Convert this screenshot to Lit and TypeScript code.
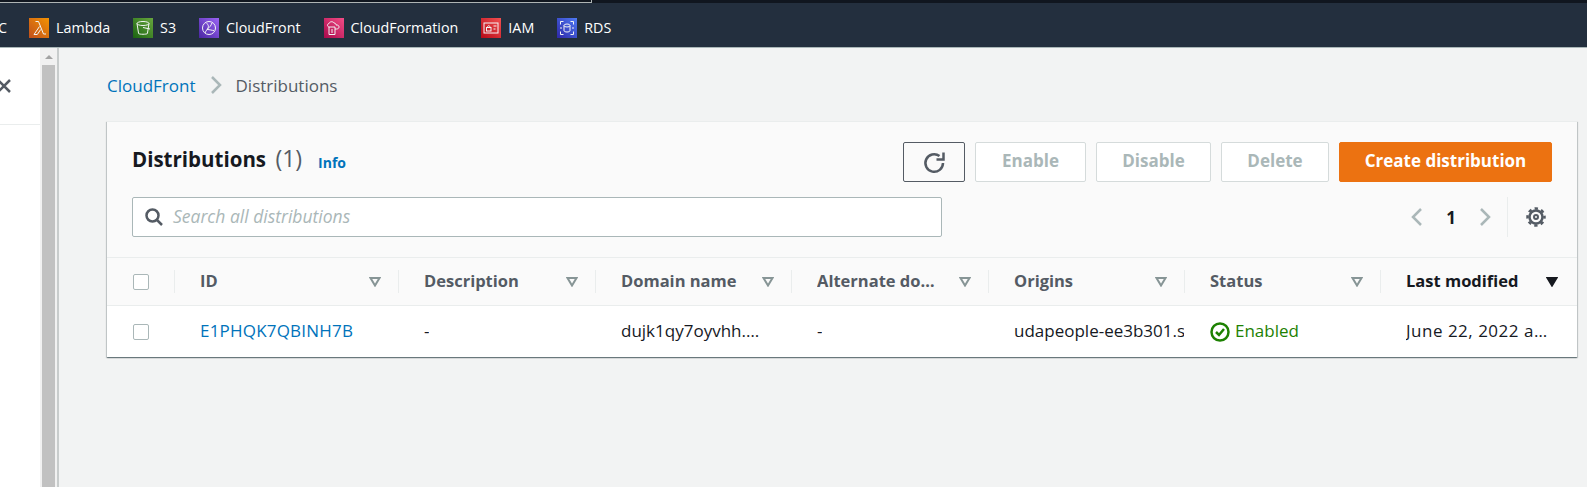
import { LitElement, html, css, svg } from 'lit'
import { customElement } from 'lit/decorators.js'

const services = [
    {
        name: 'Lambda',
        cls: 'lambda',
        glyph: svg`<path d="M6.500 3.500h3l5 12.500h2.500M10.500 8.500L5 16.500h3.300l3.400-5" />`
    },
    {
        name: 'S3',
        cls: 's3',
        glyph: svg`<ellipse cx="10" cy="5.500" rx="6" ry="2" /><path d="M4 5.500l1.600 10c.6 1 8.200 1 8.800 0l1.600-10M10 9.500l7 1.500" />`
    },
    {
        name: 'CloudFront',
        cls: 'cloudfront',
        glyph: svg`<circle cx="10" cy="10" r="6.500" /><path d="M7 4.500c3 3 3 4 1 7s-2 3.500-1 3.500M8 11.500c3 0 5 1 7 1M13 4.800c-1 3-2 4-5 6.700" />`
    },
    {
        name: 'CloudFormation',
        cls: 'cloudformation',
        glyph: svg`<path d="M5 9h6v7.500H5zM7 12h2M7 14h2M5 9c-2-.5-2-3 0-3.500C5.500 3.500 9 3 10 5c2 0 2 1.500 2 2h1c2.500 0 3 4-.5 4H11" />`
    },
    {
        name: 'IAM',
        cls: 'iam',
        glyph: svg`<rect x="3" y="5" width="14" height="10" /><rect x="5.500" y="9.500" width="4.500" height="3.500" /><path d="M6.500 9.500c0-2.500 2.500-2.500 2.500 0M12.500 8h3M12.500 11h2" />`
    },
    {
        name: 'RDS',
        cls: 'rds',
        glyph: svg`<ellipse cx="10" cy="7.500" rx="3" ry="1.500" /><path d="M7 7.500v5c0 2 6 2 6 0v-5M3.500 6.500V3.500h3M16.500 6.500V3.500h-3M3.500 13.500v3h3M16.500 13.500v3h-3M3 10h2M15 10h2" />`
    }
]

const columns = [
    { name: 'ID', cell: 'E1PHQK7QBINH7B', kind: 'link' },
    { name: 'Description', cell: '-' },
    { name: 'Domain name', cell: 'dujk1qy7oyvhh.cloudfront.net' },
    { name: 'Alternate domain names', cell: '-' },
    { name: 'Origins', cell: 'udapeople-ee3b301.s3.amazonaws.com', kind: 'clip' },
    { name: 'Status', cell: 'Enabled', kind: 'status' },
    { name: 'Last modified', cell: 'June 22, 2022 at 4:12:09 PM UTC', kind: 'date', sorted: true }
]

@customElement('app-root')
export class AppRoot extends LitElement {
    static styles = css`
        :host {
            display: flex;
            flex-direction: column;
            height: 487px;
            overflow: hidden;
            font-family: 'Open Sans', 'Noto Sans', sans-serif;
            font-size: 17px;
            color: #16191f;
            background: #f2f3f3;
        }

        .edge {
            height: 3px;
            background: #10161f;
            flex: none;
        }

        .edge-line {
            width: 592px;
            height: 3px;
            box-sizing: border-box;
            border-bottom: 1px solid #aeb4b4;
            border-right: 1px solid #aeb4b4;
        }

        .topbar {
            flex: none;
            height: 45px;
            box-sizing: border-box;
            display: flex;
            align-items: center;
            gap: 23px;
            padding-top: 5px;
            background: #232f3e;
            border-bottom: 1px solid #aab7b8;
            color: #fff;
            font-size: 14.300px;
        }

        .cut {
            width: 7px;
            margin-right: -1px;
            overflow: hidden;
            display: flex;
            justify-content: flex-end;
        }

        .service {
            display: flex;
            align-items: center;
            gap: 7px;
        }

        .service svg {
            width: 20px;
            height: 20px;
            fill: none;
            stroke: #fff;
            stroke-width: 1;
            opacity: 0.95;
        }

        .lambda {
            background: linear-gradient(45deg, #c8511b, #ff9900);
        }
        .s3 {
            background: linear-gradient(45deg, #1b660f, #6cae3e);
        }
        .cloudfront {
            background: linear-gradient(45deg, #4d27a8, #a166ff);
        }
        .cloudformation {
            background: linear-gradient(45deg, #b0084d, #ff4f8b);
        }
        .iam {
            background: linear-gradient(45deg, #bd0816, #ff5252);
        }
        .rds {
            background: linear-gradient(45deg, #2e27ad, #527fff);
        }

        .body {
            flex: 1;
            display: flex;
            min-height: 0;
        }

        .panel {
            width: 40px;
            flex: none;
            background: #fff;
        }

        .panel-head {
            height: 77px;
            box-sizing: border-box;
            border-bottom: 1px solid #eaeded;
            display: flex;
            align-items: center;
            justify-content: flex-end;
            padding: 0 28px 1px 0;
        }

        .panel-head svg {
            width: 16px;
            height: 16px;
            flex: none;
            fill: none;
            stroke: #545b64;
            stroke-width: 2.500;
        }

        .scrollbar {
            width: 17px;
            flex: none;
            box-sizing: border-box;
            padding: 0 2px;
            background: #f1f1f1;
            display: flex;
            flex-direction: column;
        }

        .arrow {
            height: 17px;
            flex: none;
            display: flex;
            align-items: center;
            justify-content: center;
        }

        .arrow::before {
            content: '';
            border: 4px solid transparent;
            border-top: 0;
            border-bottom: 4px solid #a3a3a3;
        }

        .thumb {
            flex: 1;
            background: #c1c1c1;
        }

        .main {
            flex: 1;
            min-width: 0;
            border-left: 2px solid #c8cccc;
            padding: 0 10px 0 48px;
        }

        .crumbs {
            height: 73px;
            display: flex;
            align-items: center;
            gap: 12px;
            padding-top: 1px;
            box-sizing: border-box;
            color: #545b64;
        }

        .crumbs a {
            color: #0073bb;
        }

        .crumbs svg {
            width: 16px;
            height: 20px;
            fill: none;
            stroke: #aab7b8;
            stroke-width: 2.500;
        }

        .card {
            background: #fafafa;
            border-top: 1px solid #eaeded;
            box-shadow:
                0 1px 1px 0 rgba(0, 28, 36, 0.4),
                1px 1px 1px 0 rgba(0, 28, 36, 0.15),
                -1px 1px 1px 0 rgba(0, 28, 36, 0.15);
        }

        .card-head {
            height: 135px;
            box-sizing: border-box;
            padding: 20px 25px 0 25px;
            display: grid;
            grid-template-columns: minmax(0, 1fr) auto;
            grid-template-rows: 40px 40px;
            row-gap: 15px;
        }

        .title {
            display: flex;
            align-items: center;
            gap: 16px;
        }

        h1 {
            margin: 0 0 8px;
            font-size: 20.500px;
            font-weight: 700;
            line-height: 40px;
            word-spacing: 4px;
        }

        h1 span {
            font-weight: 400;
            font-size: 23px;
            color: #545b64;
        }

        .info {
            color: #0073bb;
            font-size: 14px;
            font-weight: 700;
        }

        .actions {
            display: flex;
            gap: 10px;
        }

        button {
            height: 40px;
            box-sizing: border-box;
            border-radius: 2px;
            border: 1px solid #d5dbdb;
            background: #fff;
            color: #aab7b8;
            font: 700 17px 'Open Sans', 'Noto Sans', sans-serif;
            padding: 0 0 3px;
        }

        .refresh {
            width: 62px;
            border-color: #545b64;
            background: #fafafa;
            display: flex;
            align-items: center;
            justify-content: center;
            padding: 0;
        }

        .refresh svg {
            width: 24px;
            height: 24px;
            fill: none;
            stroke: #545b64;
            stroke-width: 2.500;
        }

        .w-enable {
            width: 111px;
        }
        .w-disable {
            width: 115px;
        }
        .w-delete {
            width: 108px;
        }

        .primary {
            width: 213px;
            background: #ec7211;
            border-color: #ec7211;
            color: #fff;
        }

        .search {
            width: 810px;
            height: 40px;
            box-sizing: border-box;
            background: #fff;
            border: 1px solid #aab7b8;
            border-radius: 2px;
            display: flex;
            align-items: center;
            gap: 9px;
            padding: 0 0 2px 11px;
            color: #aab7b8;
            font-style: italic;
            font-size: 17.500px;
        }

        .search svg {
            width: 20px;
            height: 20px;
            flex: none;
            margin-top: 2px;
            fill: none;
            stroke: #545b64;
            stroke-width: 2.500;
        }

        .pager {
            display: flex;
            align-items: center;
            justify-content: flex-end;
            color: #16191f;
            font-weight: 700;
        }

        .pager .nav {
            width: 16px;
            height: 20px;
            fill: none;
            stroke: #aab7b8;
            stroke-width: 2.500;
        }

        .page {
            width: 52px;
            text-align: center;
        }

        .gear-wrap {
            margin-left: 14px;
            padding-left: 18px;
            height: 40px;
            display: flex;
            align-items: center;
            border-left: 1px solid #eaeded;
            margin-right: 6px;
        }

        .gear-wrap svg {
            width: 20px;
            height: 20px;
            fill: none;
            stroke: #545b64;
        }

        .table {
            display: grid;
            grid-template-columns: 67px 224px 197px 196px 197px 196px 196px minmax(0, 1fr);
        }

        .th {
            height: 49px;
            box-sizing: border-box;
            border-top: 1px solid #eaeded;
            border-bottom: 1px solid #eaeded;
            display: flex;
            align-items: center;
            gap: 18px;
            padding: 0 17px 0 26px;
            color: #545b64;
            font-weight: 700;
            font-size: 16.500px;
            position: relative;
        }

        .th + .th::before {
            content: '';
            position: absolute;
            left: 0;
            top: 12px;
            bottom: 12px;
            border-left: 1px solid #eaeded;
        }

        .th span {
            flex: 1;
            min-width: 0;
            padding-bottom: 2px;
            overflow: hidden;
            white-space: nowrap;
            text-overflow: ellipsis;
        }

        .th svg {
            width: 12px;
            height: 10px;
            flex: none;
            fill: none;
            stroke: #879596;
            stroke-width: 2;
        }

        .th.sorted {
            color: #16191f;
            padding-right: 19px;
        }

        .th.sorted svg {
            fill: #16191f;
            stroke: #16191f;
        }

        .box {
            display: flex;
            align-items: center;
            padding: 0 0 0 26px;
        }

        .box i {
            display: block;
            width: 16px;
            height: 16px;
            box-sizing: border-box;
            background: #fff;
            border: 1px solid #aab7b8;
            border-radius: 2px;
        }

        .td {
            height: 51px;
            box-sizing: border-box;
            background: #fff;
            display: flex;
            align-items: center;
            padding: 0 26px;
            min-width: 0;
        }

        .td.box {
            padding: 0 0 0 26px;
        }

        .td span {
            padding-bottom: 3px;
            overflow: hidden;
            white-space: nowrap;
            text-overflow: ellipsis;
        }

        .td.link {
            color: #0073bb;
            letter-spacing: 0.2px;
        }

        .td.clip {
            padding-right: 0;
        }

        .td.clip span {
            text-overflow: clip;
        }

        .td.status {
            color: #1d8102;
            gap: 5px;
        }

        .td.status svg {
            width: 20px;
            height: 20px;
            flex: none;
            fill: none;
            stroke: #1d8102;
            stroke-width: 2.500;
        }

        .td.date {
            padding-right: 25px;
            letter-spacing: 0.5px;
        }
    `

    render() {
        return html`
            <div class="edge"><div class="edge-line"></div></div>
            <nav class="topbar">
                <div class="cut"><span>C</span></div>
                ${services.map(
                    (s) => html`
                        <div class="service">
                            <svg class=${s.cls} viewBox="0 0 20 20">${s.glyph}</svg>
                            <span>${s.name}</span>
                        </div>
                    `
                )}
            </nav>
            <div class="body">
                <aside class="panel">
                    <div class="panel-head">
                        <svg viewBox="0 0 16 16"><path d="M2 2l12 12M14 2L2 14" /></svg>
                    </div>
                </aside>
                <div class="scrollbar">
                    <div class="arrow"></div>
                    <div class="thumb"></div>
                </div>
                <main class="main">
                    <div class="crumbs">
                        <a>CloudFront</a>
                        <svg viewBox="0 0 16 20"><path d="M4 2l8 8-8 8" /></svg>
                        <span>Distributions</span>
                    </div>
                    <section class="card">
                        <div class="card-head">
                            <div class="title">
                                <h1>Distributions <span>(1)</span></h1>
                                <a class="info">Info</a>
                            </div>
                            <div class="actions">
                                <button class="refresh">
                                    <svg viewBox="0 0 24 24">
                                        <path d="M17.500 6A8.800 8.800 0 1 0 21 13" />
                                        <path d="M21.500 2.500v7h-7" />
                                    </svg>
                                </button>
                                <button class="w-enable">Enable</button>
                                <button class="w-disable">Disable</button>
                                <button class="w-delete">Delete</button>
                                <button class="primary">Create distribution</button>
                            </div>
                            <label class="search">
                                <svg viewBox="0 0 20 20">
                                    <circle cx="8.500" cy="8.500" r="6" /><path d="M13 13l5 5" />
                                </svg>
                                Search all distributions
                            </label>
                            <div class="pager">
                                <svg class="nav" viewBox="0 0 16 20"><path d="M12 2l-8 8 8 8" /></svg>
                                <span class="page">1</span>
                                <svg class="nav" viewBox="0 0 16 20"><path d="M4 2l8 8-8 8" /></svg>
                                <div class="gear-wrap">
                                    <svg viewBox="0 0 20 20">
                                        <circle cx="10" cy="10" r="6.500" stroke-width="2.500" />
                                        <circle
                                            cx="10"
                                            cy="10"
                                            r="8.500"
                                            stroke-width="2.500"
                                            stroke-dasharray="3.340 3.340"
                                            stroke-dashoffset="1.670"
                                        />
                                        <circle cx="10" cy="10" r="2" stroke-width="2" />
                                    </svg>
                                </div>
                            </div>
                        </div>
                        <div class="table">
                            <div class="th box"><i></i></div>
                            ${columns.map(
                                (c) => html`
                                    <div class="th ${c.sorted ? 'sorted' : ''}">
                                        <span>${c.name}</span>
                                        <svg viewBox="0 0 12 10"><path d="M1.500 1h9L6 8.500z" /></svg>
                                    </div>
                                `
                            )}
                            <div class="td box"><i></i></div>
                            ${columns.map(
                                (c) => html`
                                    <div class="td ${c.kind ?? ''}">
                                        ${c.kind === 'status'
                                            ? html`<svg viewBox="0 0 20 20">
                                                  <circle cx="10" cy="10" r="8.500" />
                                                  <path d="M6 10l3 3 5-6" />
                                              </svg>`
                                            : ''}
                                        <span>${c.cell}</span>
                                    </div>
                                `
                            )}
                        </div>
                    </section>
                </main>
            </div>
        `
    }
}
